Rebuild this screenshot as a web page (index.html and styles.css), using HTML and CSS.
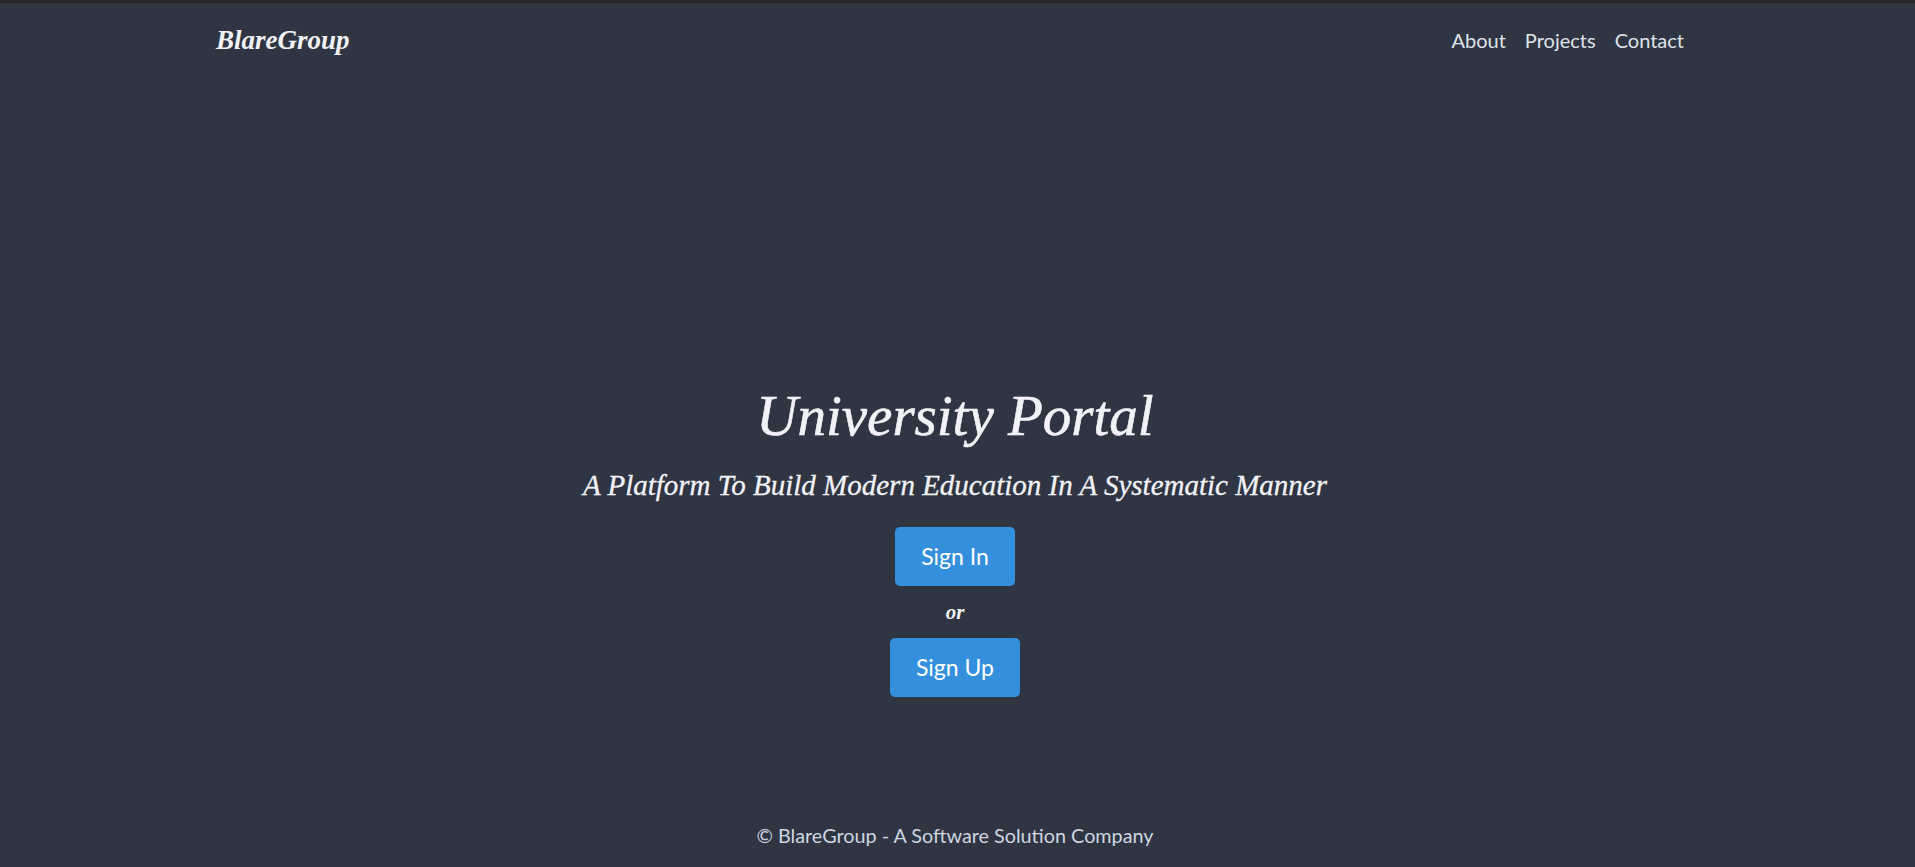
FILE: index.html
```html
<!DOCTYPE html>
<html lang="en">
<head>
<meta charset="utf-8">
<title>University Portal</title>
<link rel="stylesheet" href="styles.css">
</head>
<body>
<div class="page">
  <header class="topbar">
    <div class="container bar-inner">
      <a class="brand" href="#">BlareGroup</a>
      <nav class="nav">
        <a href="#">About</a>
        <a href="#">Projects</a>
        <a href="#">Contact</a>
      </nav>
    </div>
  </header>
  <main class="hero">
    <h1 class="title">University Portal</h1>
    <h2 class="subtitle">A Platform To Build Modern Education In A Systematic Manner</h2>
    <a class="btn" href="#">Sign In</a>
    <p class="or">or</p>
    <a class="btn" href="#">Sign Up</a>
  </main>
  <footer class="footer">© BlareGroup - A Software Solution Company</footer>
</div>
</body>
</html>
```

FILE: styles.css
```css
* { box-sizing: border-box; }
html, body { margin: 0; padding: 0; }
body {
  background: #2f3542;
  font-family: Lato, "Noto Sans", sans-serif;
  color: #dfe4ea;
}
.page {
  min-height: 100vh;
  display: flex;
  flex-direction: column;
  border-top: 3px solid #262626;
}
.topbar { height: 74px; display: flex; align-items: center; }
.container { width: 1483px; margin: 0 auto; }
.bar-inner { display: flex; align-items: center; justify-content: space-between; padding-right: 15px; }
.brand {
  font-family: "Liberation Serif", serif;
  font-style: italic;
  font-weight: bold;
  font-size: 27px;
  color: #f1f2f6;
  text-decoration: none;
}
.nav { display: flex; gap: 19px; }
.nav a {
  color: #dfe4ea;
  text-decoration: none;
  font-size: 20px;
}
.hero {
  flex: 1;
  display: flex;
  flex-direction: column;
  align-items: center;
  justify-content: flex-end;
  padding: 0 5px 106px 0;
}
.title {
  margin: 0 0 18px;
  font-family: "Liberation Serif", serif;
  font-style: italic;
  font-weight: normal;
  font-size: 57px;
  line-height: 1.2;
  color: #f1f2f6;
  -webkit-text-stroke: 0.6px #f1f2f6;
}
.subtitle {
  margin: 0 0 24px;
  font-family: "Liberation Serif", serif;
  font-style: italic;
  font-weight: normal;
  font-size: 29px;
  line-height: 1.2;
  color: #f1f2f6;
  -webkit-text-stroke: 0.3px #f1f2f6;
}
.btn {
  display: inline-block;
  background: #3490dc;
  color: #fff;
  text-decoration: none;
  font-size: 23px;
  line-height: 35px;
  padding: 12px 26px;
  border-radius: 5px;
}
.or {
  margin: 12px 0;
  font-family: "Liberation Serif", serif;
  font-style: italic;
  font-weight: bold;
  font-size: 21px;
  line-height: 28px;
  color: #f1f2f6;
}
.footer {
  height: 64px;
  display: flex;
  align-items: center;
  justify-content: center;
  padding-right: 5px;
  font-size: 19.8px;
  color: #ced6e0;
}
```
